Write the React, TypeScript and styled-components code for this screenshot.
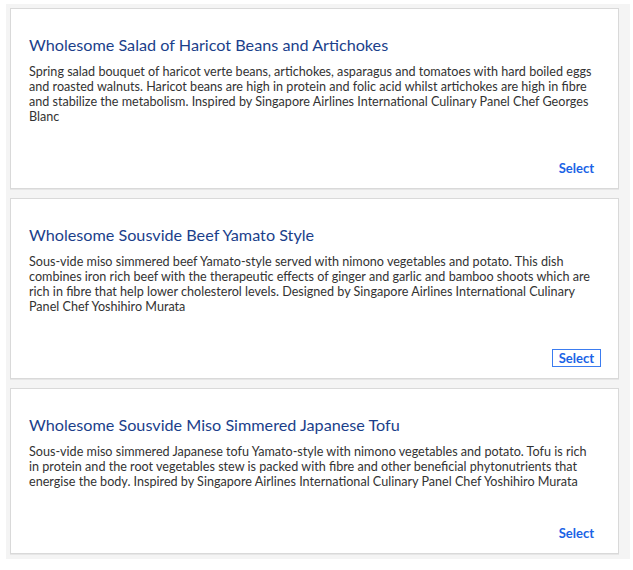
import styled, { createGlobalStyle } from 'styled-components';

const GlobalStyle = createGlobalStyle`
  html, body {
    margin: 0;
    padding: 0;
    background: #ffffff;
  }
  body {
    font-family: Lato, "Open Sans", Arial, sans-serif;
  }
`;

type Meal = {
  title: string;
  description: string;
  focused?: boolean;
  short?: boolean;
};

const meals: Meal[] = [
  {
    title: 'Wholesome Salad of Haricot Beans and Artichokes',
    description:
      'Spring salad bouquet of haricot verte beans, artichokes, asparagus and tomatoes with hard boiled eggs and roasted walnuts. Haricot beans are high in protein and folic acid whilst artichokes are high in fibre and stabilize the metabolism. Inspired by Singapore Airlines International Culinary Panel Chef Georges Blanc',
  },
  {
    title: 'Wholesome Sousvide Beef Yamato Style',
    description:
      'Sous-vide miso simmered beef Yamato-style served with nimono vegetables and potato. This dish combines iron rich beef with the therapeutic effects of ginger and garlic and bamboo shoots which are rich in fibre that help lower cholesterol levels. Designed by Singapore Airlines International Culinary Panel Chef Yoshihiro Murata',
    focused: true,
  },
  {
    title: 'Wholesome Sousvide Miso Simmered Japanese Tofu',
    description:
      'Sous-vide miso simmered Japanese tofu Yamato-style with nimono vegetables and potato. Tofu is rich in protein and the root vegetables stew is packed with fibre and other beneficial phytonutrients that energise the body. Inspired by Singapore Airlines International Culinary Panel Chef Yoshihiro Murata',
    short: true,
  },
];

const Panel = styled.div`
  margin: 4px 3px 0 6px;
  width: 624px;
  background: #f4f4f4;
  padding: 4px 11px 5px 4px;
  box-sizing: border-box;
  display: flex;
  flex-direction: column;
  gap: 9px;
`;

const Card = styled.div<{ $short?: boolean }>`
  background: #ffffff;
  border: 1px solid #d9d9d9;
  box-shadow: 0 1px 0 #e6e6e6;
  height: ${({ $short }) => ($short ? '166px' : '181px')};
  box-sizing: border-box;
  padding: 26px 18px 11px 18px;
  display: flex;
  flex-direction: column;
`;

const Title = styled.h3`
  margin: 0 0 9px 0;
  font-size: 16.2px;
  line-height: 20px;
  font-weight: 400;
  color: #1b3f8b;
`;

const Description = styled.p`
  margin: 0;
  padding-right: 5px;
  font-size: 12.6px;
  line-height: 15px;
  color: #333333;
  flex: 1;
`;

const Actions = styled.div`
  display: flex;
  justify-content: flex-end;
`;

const SelectButton = styled.button<{ $focused?: boolean }>`
  font-family: inherit;
  font-size: 13px;
  font-weight: 700;
  color: #1a63e6;
  background: none;
  border: 1px solid ${({ $focused }) => ($focused ? '#3b7cf0' : 'transparent')};
  padding: 1px 6px;
  margin-right: -1px;
  cursor: pointer;
  line-height: 14px;
`;

export default function App() {
  return (
    <>
      <GlobalStyle />
      <Panel>
        {meals.map((meal) => (
          <Card key={meal.title} $short={meal.short}>
            <Title>{meal.title}</Title>
            <Description>{meal.description}</Description>
            <Actions>
              <SelectButton $focused={meal.focused}>Select</SelectButton>
            </Actions>
          </Card>
        ))}
      </Panel>
    </>
  );
}
